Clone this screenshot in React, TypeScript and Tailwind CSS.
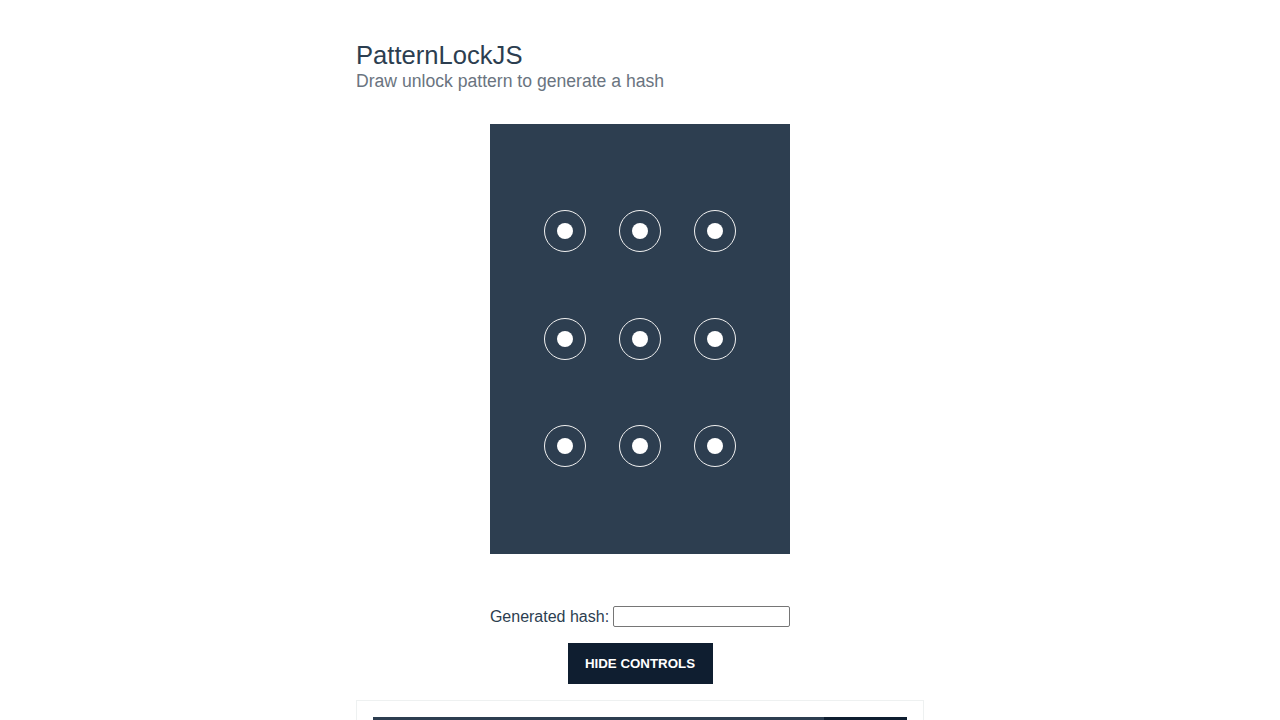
import { useState } from "react";

const cols = [75, 150, 225];
const rows = [107, 215, 322];

function PatternCanvas() {
  return (
    <svg width="300" height="430" viewBox="0 0 300 430" className="block">
      <rect width="300" height="430" fill="#2d3e50" />
      {rows.map((y) =>
        cols.map((x) => (
          <g key={`${x}-${y}`}>
            <circle cx={x} cy={y} r="20.5" fill="none" stroke="#f1f1f1" strokeWidth="1" />
            <circle cx={x} cy={y} r="8" fill="#ffffff" />
          </g>
        ))
      )}
    </svg>
  );
}

export default function App() {
  const [showControls, setShowControls] = useState(true);

  return (
    <div className="min-h-screen bg-white font-['Liberation_Sans',Arial,sans-serif]">
      <div className="mx-auto w-[568px] pt-[41px]">
        <h1 className="text-[25.6px] leading-[1.15] text-[#2c3e50]">PatternLockJS</h1>
        <p className="mt-[1px] text-[17.6px] leading-[1.15] text-[#6a7480]">
          Draw unlock pattern to generate a hash
        </p>

        <div className="mt-[32px] flex justify-center">
          <PatternCanvas />
        </div>

        <div className="mt-[52px] flex h-[21px] items-center justify-center text-[16px] leading-[21px] text-[#2c3e50]">
          <label htmlFor="hash">Generated hash:</label>
          <input
            id="hash"
            type="text"
            readOnly
            className="ml-[4px] h-[21px] w-[177px] rounded-[2px] border border-[#767676] bg-white px-1 text-[13px] outline-none"
          />
        </div>

        <div className="mt-[16px] flex justify-center">
          <button
            onClick={() => setShowControls(!showControls)}
            className="h-[41px] w-[145px] bg-[#0f1e30] pt-[1px] text-[13.3px] font-bold uppercase text-white"
          >
            {showControls ? "Hide controls" : "Show controls"}
          </button>
        </div>

        {showControls && (
          <div className="mt-[16px] border border-[#eef1f1] p-[16px]">
            <div className="flex h-[40px]">
              <div className="flex-1 bg-[#2d3e50]" />
              <div className="w-[83px] bg-[#0f1e30]" />
            </div>
          </div>
        )}
      </div>
    </div>
  );
}
